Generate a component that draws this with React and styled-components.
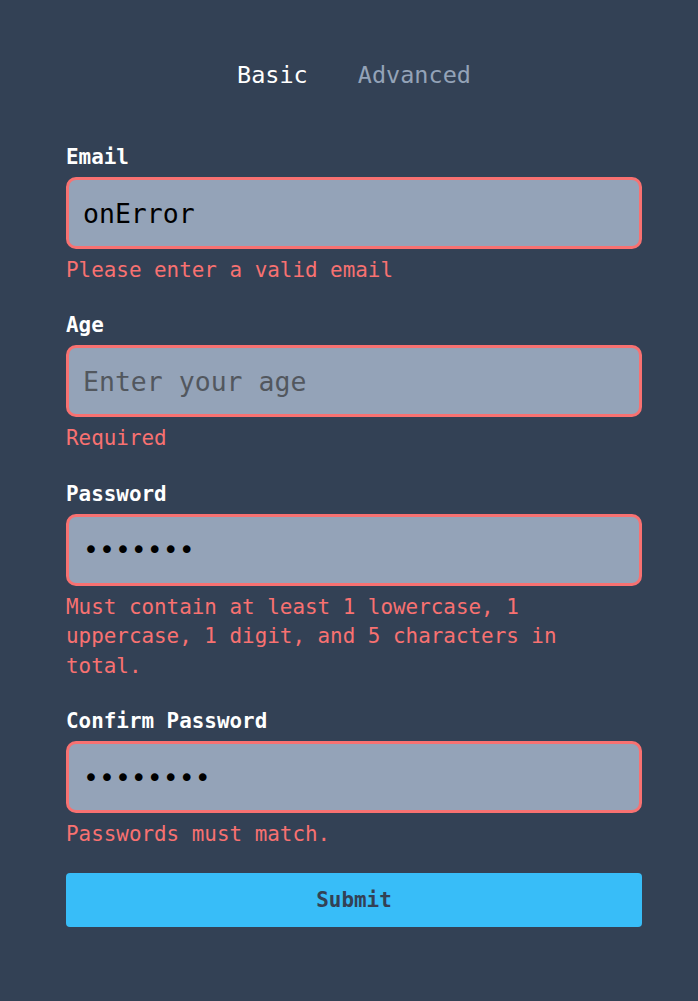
import React, { useState } from "react";
import styled, { createGlobalStyle } from "styled-components";

const GlobalStyle = createGlobalStyle`
  html, body {
    margin: 0;
    padding: 0;
    background: #334155;
  }
  body {
    font-family: "DejaVu Sans Mono", "Liberation Mono", monospace;
  }
`;

const Page = styled.div`
  min-height: 1001px;
  background: #334155;
  padding: 59px 0 0 66px;
  box-sizing: border-box;
`;

const Container = styled.div`
  width: 576px;
`;

const Tabs = styled.div`
  display: flex;
  justify-content: center;
  margin-bottom: 54px;
`;

const Tab = styled.button`
  background: none;
  border: none;
  padding: 0 25px;
  font-family: inherit;
  font-size: 23.5px;
  line-height: 32px;
  color: ${(p) => (p.$active ? "#ffffff" : "#94a3b8")};
  cursor: pointer;
`;

const Field = styled.div`
  display: flex;
  flex-direction: column;
  margin-bottom: 27.5px;

  &:last-of-type {
    margin-bottom: 23px;
  }
`;

const Label = styled.label`
  font-size: 20.9px;
  line-height: 24px;
  font-weight: bold;
  color: #ffffff;
  margin-bottom: 8px;
`;

const Input = styled.input`
  box-sizing: border-box;
  width: 100%;
  height: 72px;
  padding: 0 14px;
  background: #94a3b8;
  border: 3px solid ${(p) => (p.$error ? "#f87171" : "transparent")};
  border-radius: 10px;
  font-family: inherit;
  font-size: 26.5px;
  color: #000;
  outline: none;

  &::placeholder {
    color: #52575e;
  }
`;

const ErrorText = styled.div`
  margin-top: 7px;
  font-size: 20.9px;
  line-height: 29.75px;
  color: #f87171;
`;

const Submit = styled.button`
  width: 100%;
  height: 54px;
  border: none;
  border-radius: 4px;
  background: #38bdf8;
  color: #334155;
  font-family: inherit;
  font-size: 20.9px;
  font-weight: bold;
  cursor: pointer;
`;

const fields = [
  {
    id: "email",
    label: "Email",
    type: "text",
    value: "onError",
    error: "Please enter a valid email",
  },
  {
    id: "age",
    label: "Age",
    type: "text",
    value: "",
    placeholder: "Enter your age",
    error: "Required",
  },
  {
    id: "password",
    label: "Password",
    type: "password",
    value: "1234567",
    error:
      "Must contain at least 1 lowercase, 1 uppercase, 1 digit, and 5 characters in total.",
  },
  {
    id: "confirm",
    label: "Confirm Password",
    type: "password",
    value: "12345678",
    error: "Passwords must match.",
  },
];

const App = () => {
  const [tab, setTab] = useState("basic");

  return (
    <>
      <GlobalStyle />
      <Page>
        <Container>
          <Tabs>
            <Tab $active={tab === "basic"} onClick={() => setTab("basic")}>
              Basic
            </Tab>
            <Tab
              $active={tab === "advanced"}
              onClick={() => setTab("advanced")}
            >
              Advanced
            </Tab>
          </Tabs>
          <form onSubmit={(e) => e.preventDefault()}>
            {fields.map((f) => (
              <Field key={f.id}>
                <Label htmlFor={f.id}>{f.label}</Label>
                <Input
                  id={f.id}
                  type={f.type}
                  defaultValue={f.value}
                  placeholder={f.placeholder}
                  $error={!!f.error}
                />
                {f.error && <ErrorText>{f.error}</ErrorText>}
              </Field>
            ))}
            <Submit type="submit">Submit</Submit>
          </form>
        </Container>
      </Page>
    </>
  );
};

export default App;
